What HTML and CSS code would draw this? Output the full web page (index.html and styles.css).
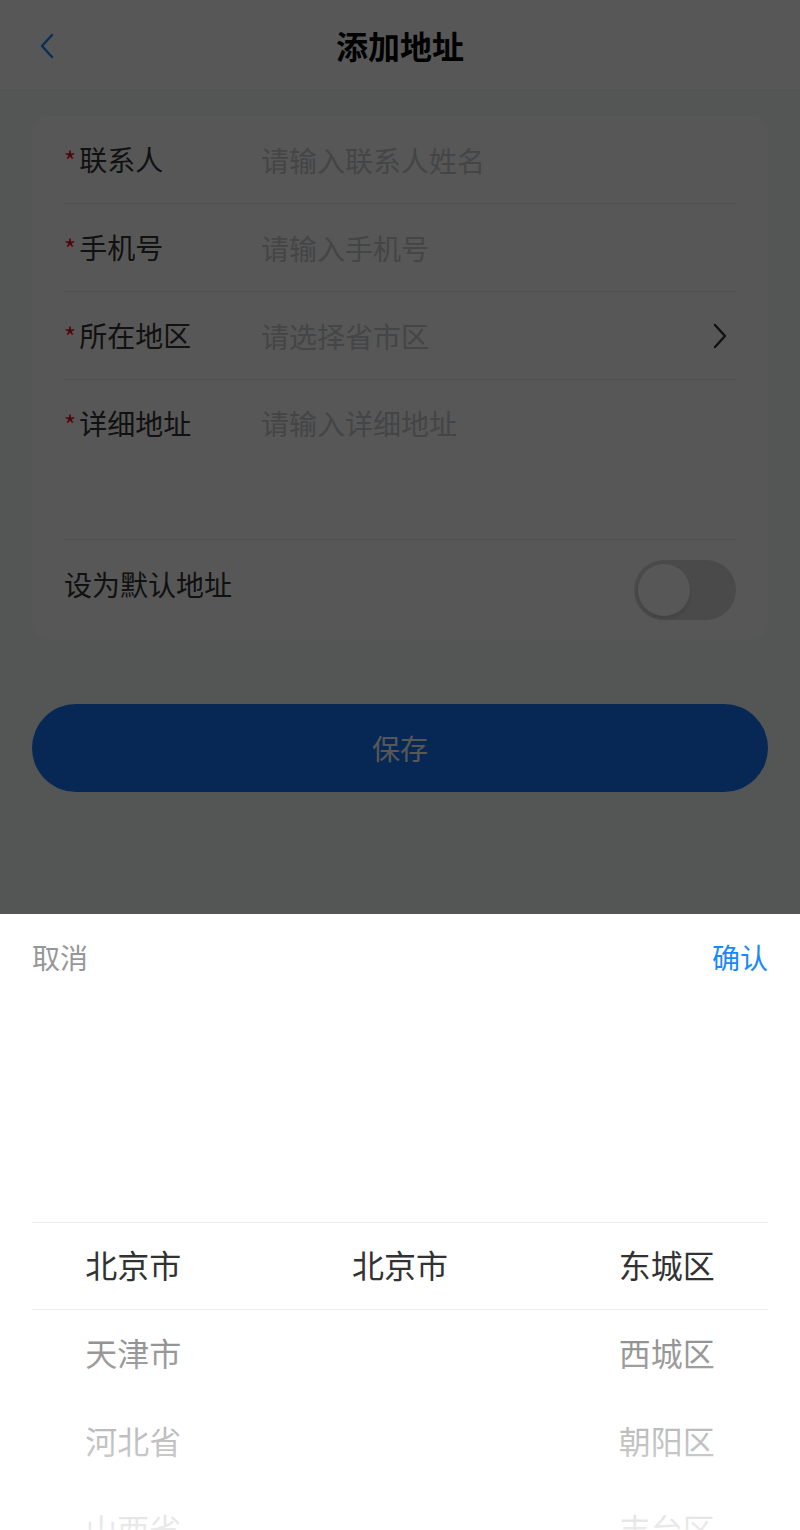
FILE: index.html
```html
<!DOCTYPE html>
<html lang="zh-CN">
<head>
    <meta charset="UTF-8">
    <meta name="viewport" content="width=device-width, initial-scale=1.0">
    <title>添加地址</title>
    <link rel="stylesheet" href="styles.css">
</head>
<body>
    <header class="nav-bar">
        <span class="nav-back">
            <svg width="18" height="28" viewBox="0 0 18 28"><path d="M14 3 L4 14 L14 25" fill="none" stroke="#1989fa" stroke-width="2.4" stroke-linecap="round" stroke-linejoin="round"/></svg>
        </span>
        <h1 class="nav-title">添加地址</h1>
    </header>

    <main class="page">
        <div class="card">
            <div class="field">
                <label class="field-label"><span class="req">*</span>联系人</label>
                <span class="field-value placeholder">请输入联系人姓名</span>
            </div>
            <div class="field">
                <label class="field-label"><span class="req">*</span>手机号</label>
                <span class="field-value placeholder">请输入手机号</span>
            </div>
            <div class="field">
                <label class="field-label"><span class="req">*</span>所在地区</label>
                <span class="field-value placeholder">请选择省市区</span>
                <svg class="arrow" width="20" height="28" viewBox="0 0 20 28"><path d="M5 3 L15 14 L5 25" fill="none" stroke="#323233" stroke-width="2.4" stroke-linecap="round" stroke-linejoin="round"/></svg>
            </div>
            <div class="field field-textarea">
                <label class="field-label"><span class="req">*</span>详细地址</label>
                <span class="field-value placeholder textarea">请输入详细地址</span>
            </div>
            <div class="field field-switch">
                <label class="field-label switch-label">设为默认地址</label>
                <span class="switch"><span class="switch-knob"></span></span>
            </div>
        </div>

        <button class="save-btn">保存</button>
    </main>

    <div class="overlay"></div>

    <div class="popup">
        <div class="toolbar">
            <span class="toolbar-cancel">取消</span>
            <span class="toolbar-confirm">确认</span>
        </div>
        <div class="picker">
            <div class="picker-column">
                <div class="picker-item">北京市</div>
                <div class="picker-item">天津市</div>
                <div class="picker-item">河北省</div>
                <div class="picker-item">山西省</div>
            </div>
            <div class="picker-column">
                <div class="picker-item">北京市</div>
            </div>
            <div class="picker-column">
                <div class="picker-item">东城区</div>
                <div class="picker-item">西城区</div>
                <div class="picker-item">朝阳区</div>
                <div class="picker-item">丰台区</div>
            </div>
            <div class="picker-mask"></div>
            <div class="picker-frame"></div>
        </div>
    </div>
</body>
</html>
```

FILE: styles.css
```css
* {
    box-sizing: border-box;
}
body {
    margin: 0;
    font-family: "Noto Sans CJK SC", "Noto Sans", sans-serif;
    background-color: #f7f8fa;
    color: #323233;
    height: 1530px;
    overflow: hidden;
}
.nav-bar {
    position: relative;
    height: 91px;
    background-color: #fff;
    border-bottom: 1px solid #ebedf0;
    display: flex;
    align-items: center;
    justify-content: center;
}
.nav-back {
    position: absolute;
    left: 38px;
    top: 32px;
    display: flex;
}
.nav-title {
    margin: 0;
    font-size: 32px;
    font-weight: bold;
    color: #000;
    line-height: 44px;
}
.page {
    padding: 25px 32px 0;
}
.card {
    background-color: #fff;
    border-radius: 16px;
    padding: 0 32px;
}
.field {
    display: flex;
    align-items: center;
    height: 88px;
    border-bottom: 1px solid #ebedf0;
    font-size: 28px;
    line-height: 40px;
}
.field-label {
    width: 197px;
    flex-shrink: 0;
    color: #323233;
}
.req {
    color: #ee0a24;
    margin-right: 3px;
    font-size: 26px;
}
.field-value {
    flex: 1;
}
.placeholder {
    color: #c8c9cc;
}
.arrow {
    margin-right: 6px;
}
.field-textarea {
    height: 160px;
    align-items: flex-start;
    padding-top: 23px;
}
.field-switch {
    height: 100px;
    border-bottom: none;
    justify-content: space-between;
}
.switch-label {
    margin-top: -13px;
}
.switch {
    width: 102px;
    height: 60px;
    border-radius: 30px;
    background-color: #dadada;
    padding: 4px;
    display: flex;
}
.switch-knob {
    width: 52px;
    height: 52px;
    border-radius: 50%;
    background-color: #fff;
    box-shadow: 0 3px 4px rgba(0, 0, 0, 0.12);
}
.save-btn {
    display: block;
    width: 100%;
    height: 88px;
    margin-top: 64px;
    border: none;
    border-radius: 44px;
    background-color: #1677fa;
    color: #fff;
    font-family: inherit;
    font-size: 28px;
    padding-bottom: 2px;
}
.overlay {
    position: fixed;
    top: 0;
    left: 0;
    right: 0;
    bottom: 0;
    background-color: rgba(0, 0, 0, 0.66);
}
.popup {
    position: fixed;
    left: 0;
    right: 0;
    bottom: 0;
    height: 616px;
    background-color: #fff;
}
.toolbar {
    height: 88px;
    padding: 0 32px 3px;
    display: flex;
    align-items: center;
    justify-content: space-between;
    font-size: 28px;
}
.toolbar-cancel {
    color: #969799;
}
.toolbar-confirm {
    color: #1989fa;
}
.picker {
    position: relative;
    height: 528px;
    display: flex;
    overflow: hidden;
}
.picker-column {
    flex: 1;
    padding-top: 220px;
}
.picker-item {
    height: 88px;
    line-height: 84px;
    text-align: center;
    font-size: 32px;
    color: #323233;
}
.picker-mask {
    position: absolute;
    top: 0;
    left: 0;
    right: 0;
    bottom: 0;
    background-image: linear-gradient(180deg, rgba(255, 255, 255, 0.9), rgba(255, 255, 255, 0.4)),
        linear-gradient(0deg, rgba(255, 255, 255, 0.9), rgba(255, 255, 255, 0.4));
    background-repeat: no-repeat;
    background-position: top, bottom;
    background-size: 100% 220px;
}
.picker-frame {
    position: absolute;
    top: 220px;
    left: 32px;
    right: 32px;
    height: 88px;
    border-top: 1px solid #ebedf0;
    border-bottom: 1px solid #ebedf0;
}
```
